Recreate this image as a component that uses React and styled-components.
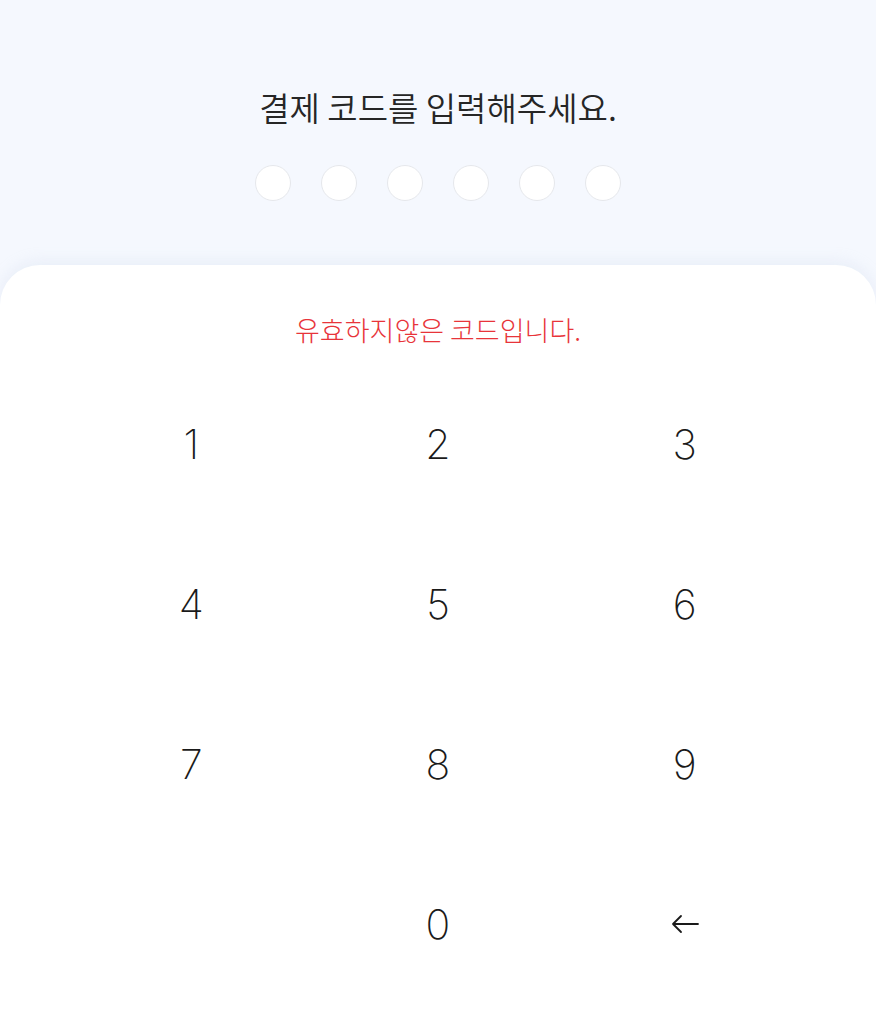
import styled, { createGlobalStyle } from "styled-components";

const GlobalStyle = createGlobalStyle`
  html, body {
    margin: 0;
    padding: 0;
    background: #f5f8fe;
  }
  body {
    font-family: "Noto Sans CJK KR", "Noto Sans", sans-serif;
  }
`;

const Screen = styled.div`
  width: 876px;
  height: 1025px;
  display: flex;
  flex-direction: column;
  background: #f5f8fe;
  overflow: hidden;
`;

const Header = styled.div`
  height: 265px;
  display: flex;
  flex-direction: column;
  align-items: center;
  padding-top: 83px;
  box-sizing: border-box;
`;

const Title = styled.h1`
  margin: 0;
  font-size: 33px;
  font-weight: 350;
  color: #262626;
  line-height: 48px;
`;

const Dots = styled.div`
  display: flex;
  gap: 30px;
  margin-top: 34px;
`;

const Dot = styled.span`
  box-sizing: border-box;
  width: 36px;
  height: 36px;
  border-radius: 50%;
  background: ${(p) => (p.filled ? "#262626" : "#ffffff")};
  border: 1px solid #e6e8ec;
`;

const Panel = styled.div`
  flex: 1;
  background: #ffffff;
  border-radius: 40px 40px 0 0;
  box-shadow: 0 -4px 14px rgba(200, 210, 230, 0.25);
  display: flex;
  flex-direction: column;
  align-items: center;
`;

const ErrorText = styled.p`
  margin: 47px 0 0;
  font-size: 27px;
  font-weight: 300;
  color: #e8343a;
  line-height: 36px;
`;

const Keypad = styled.div`
  width: 740px;
  margin-top: 16px;
  display: grid;
  grid-template-columns: repeat(3, 1fr);
  grid-auto-rows: 160px;
`;

const Key = styled.button`
  border: none;
  background: transparent;
  font-family: Inter, "Noto Sans", sans-serif;
  font-size: 41px;
  font-weight: 200;
  color: #1a1a1a;
  display: flex;
  align-items: center;
  justify-content: center;
  padding: 0;
  cursor: pointer;
`;

const keys = ["1", "2", "3", "4", "5", "6", "7", "8", "9", "", "0", "back"];

export default function App() {
  return (
    <Screen>
      <GlobalStyle />
      <Header>
        <Title>결제 코드를 입력해주세요.</Title>
        <Dots>
          {[0, 1, 2, 3, 4, 5].map((i) => (
            <Dot key={i} />
          ))}
        </Dots>
      </Header>
      <Panel>
        <ErrorText>유효하지않은 코드입니다.</ErrorText>
        <Keypad>
          {keys.map((k, i) =>
            k === "back" ? (
              <Key key={i} aria-label="지우기">
                <svg width="28" height="20" viewBox="0 0 28 20" fill="none">
                  <path
                    d="M27 10H2M10 2L2 10L10 18"
                    stroke="#1a1a1a"
                    strokeWidth="1.8"
                    strokeLinecap="round"
                    strokeLinejoin="round"
                  />
                </svg>
              </Key>
            ) : (
              <Key key={i}>{k}</Key>
            )
          )}
        </Keypad>
      </Panel>
    </Screen>
  );
}
